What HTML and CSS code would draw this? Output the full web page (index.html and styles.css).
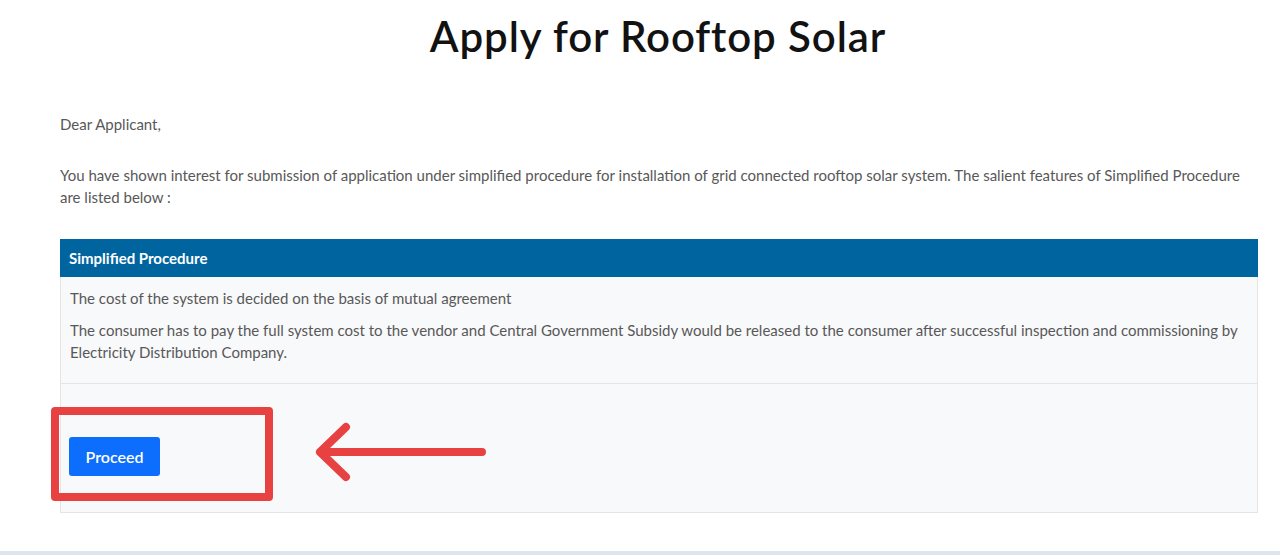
FILE: index.html
```html
<!DOCTYPE html>
<html lang="en">
<head>
<meta charset="utf-8">
<title>Apply for Rooftop Solar</title>
<link rel="stylesheet" href="styles.css">
</head>
<body>
<div class="page">
  <h1 class="title">Apply for Rooftop Solar</h1>
  <div class="content">
    <p class="greet">Dear Applicant,</p>
    <p class="intro">You have shown interest for submission of application under simplified procedure for installation of grid connected rooftop solar system. The salient features of Simplified Procedure are listed below :</p>
    <div class="card">
      <div class="card-head">Simplified Procedure</div>
      <div class="card-body">
        <p>The cost of the system is decided on the basis of mutual agreement</p>
        <p>The consumer has to pay the full system cost to the vendor and Central Government Subsidy would be released to the consumer after successful inspection and commissioning by Electricity Distribution Company.</p>
      </div>
      <div class="card-foot">
        <button class="btn" type="button">Proceed</button>
        <div class="highlight"></div>
        <svg class="arrow" width="180" height="64" viewBox="0 0 180 64">
          <path d="M6 32 H168 M32 7 L6 32 L32 57" fill="none" stroke="#e84141" stroke-width="8" stroke-linecap="round" stroke-linejoin="round"/>
        </svg>
      </div>
    </div>
  </div>
  <div class="bottom-strip"></div>
</div>
</body>
</html>
```

FILE: styles.css
```css
* { box-sizing: border-box; }
html, body { margin: 0; padding: 0; background: #ffffff; }
body { font-family: Lato, "Open Sans", Arial, sans-serif; color: #585858; }
.page { width: 1280px; height: 555px; position: relative; overflow: hidden; }
.title {
  margin: 0;
  padding-top: 12px;
  text-align: center;
  font-size: 42px;
  font-weight: 600;
  letter-spacing: 0.9px;
  color: #121212;
  line-height: 48px;
  padding-left: 36px;
}
.content { padding: 0 22px 0 60px; }
.greet { margin: 53px 0 0; font-size: 15px; line-height: 22px; }
.intro { margin: 29px 0 0; font-size: 15px; line-height: 22px; }
.card {
  margin-top: 31px;
  width: 1198px;
  border: 1px solid #e3e5e8;
  border-top: 0;
  background: #f8f9fb;
}
.card-head {
  background: #00659f;
  color: #ffffff;
  font-weight: 700;
  font-size: 15px;
  line-height: 22px;
  padding: 8px 9px;
  margin: 0 -1px;
}
.card-body { padding: 10px 9px 10px; font-size: 15px; line-height: 22px; border-bottom: 1px solid #e3e5e8; }
.card-body p { margin: 0 0 10px; }
.card-foot { position: relative; height: 128px; padding: 53px 0 0 8px; }
.btn {
  font-family: Lato, "Open Sans", Arial, sans-serif;
  background: #0d6efd;
  color: #ffffff;
  border: 0;
  border-radius: 3px;
  font-size: 16px;
  font-weight: 600;
  height: 39px;
  width: 91px;
  padding: 0;
}
.highlight {
  position: absolute;
  left: -10px;
  top: 23px;
  width: 222px;
  height: 94px;
  border: 8px solid #e84141;
  border-radius: 4px;
}
.arrow { position: absolute; left: 253px; top: 36px; }
.bottom-strip { position: absolute; left: 0; right: 0; bottom: 0; height: 4px; background: #dde6ee; }
```
